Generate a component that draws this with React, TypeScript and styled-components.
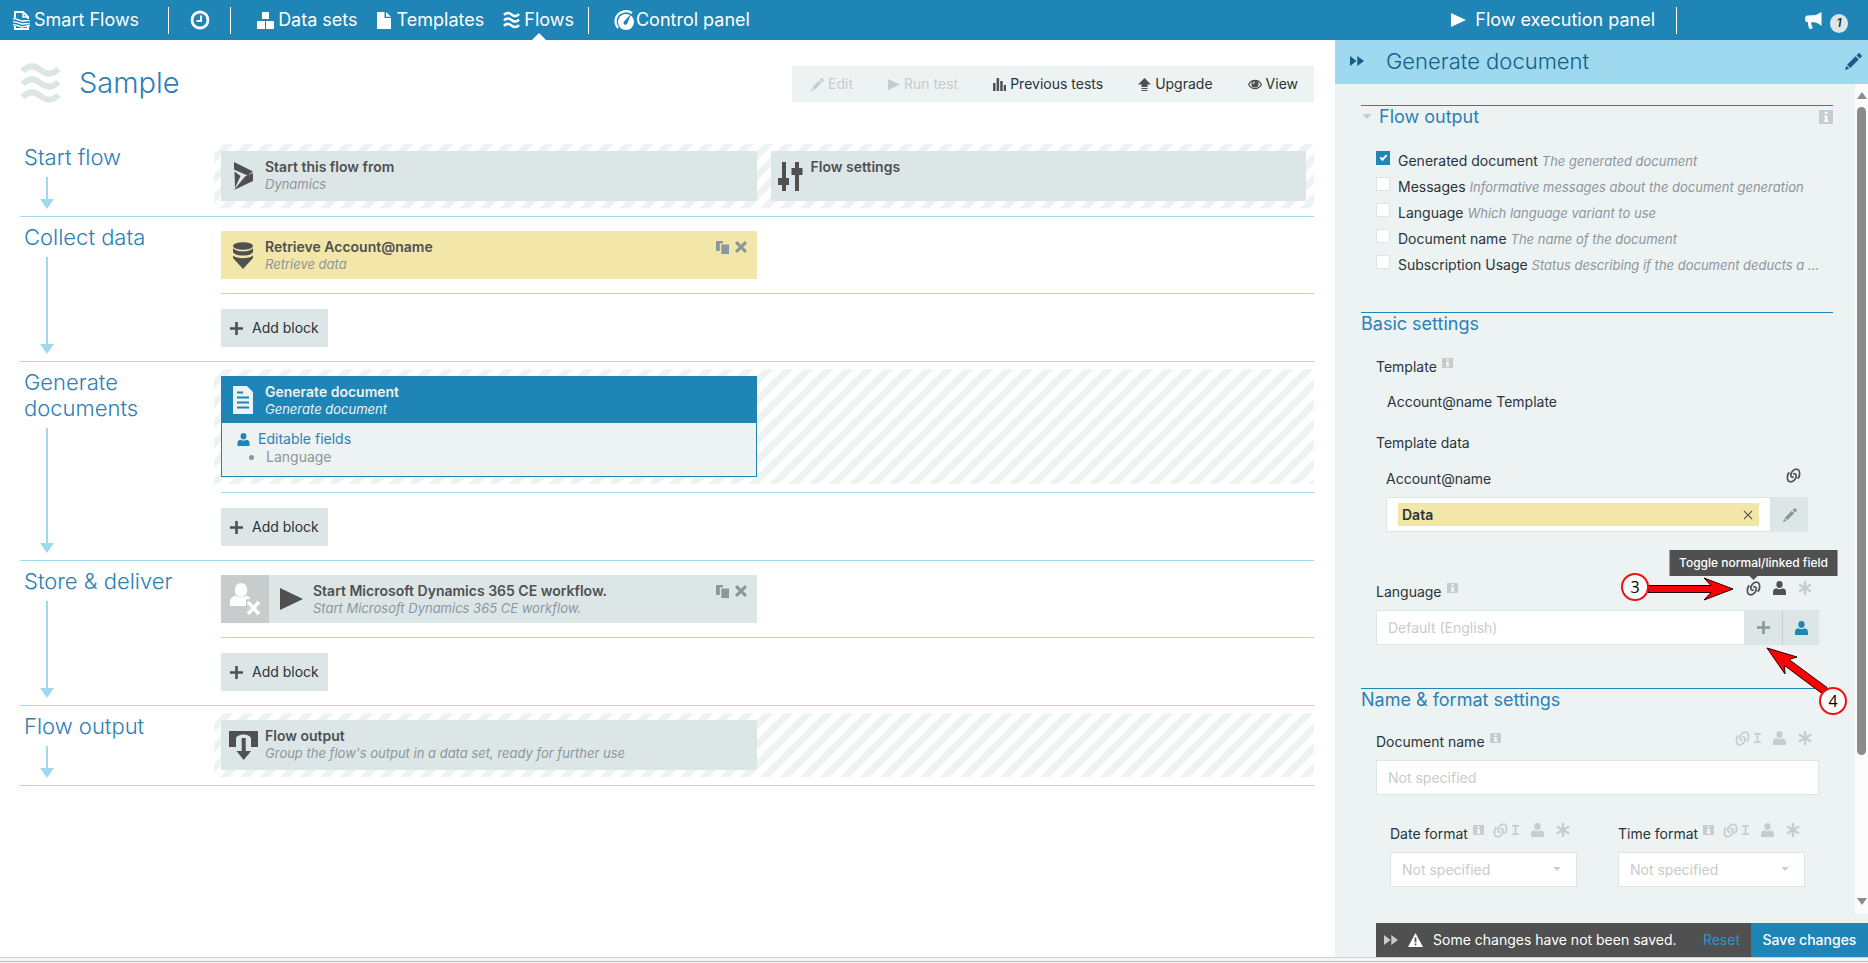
import React from "react";
import styled, { createGlobalStyle, css } from "styled-components";

const c = {
  blue: "#1f84b6",
  heading: "#2b80b6",
  pale: "#9fd9ef",
  navy: "#155f85",
  mist: "#edf3f3",
  block: "#dde6e7",
  sand: "#f2e6a8",
  ink: "#2a3439",
  dark: "#4f504f",
  muted: "#8c969d",
  faint: "#c7cccc",
};

const GlobalStyle = createGlobalStyle`
  *, *::before, *::after { box-sizing: border-box; }
  body { margin: 0; background: #fff; }
  body, button, input, select { font-family: Inter, "Liberation Sans", sans-serif; }
  body { font-size: 14px; line-height: 18px; color: ${c.ink}; }
  button { border: 0; background: none; padding: 0; margin: 0; font-size: 14px; line-height: 18px; color: inherit; cursor: pointer; }
  a { color: inherit; text-decoration: none; }
  h1, h2, h3, ul, p { margin: 0; padding: 0; font-weight: inherit; }
  ul { list-style: none; }
  svg { display: block; flex: none; overflow: visible; }
`;

/* ---------- icons ---------- */

type IconProps = { w?: number; h?: number };

const Waves = ({ w = 17, h = 16 }: IconProps) => (
  <svg width={w} height={h} viewBox="0 0 40 38" fill="none" stroke="currentColor" strokeWidth="6">
    <path d="M2 7C8 1 14 1 20 6s12 5 18-1" />
    <path d="M2 20C8 14 14 14 20 19s12 5 18-1" />
    <path d="M2 33C8 27 14 27 20 32s12 5 18-1" />
  </svg>
);

const LogoIcon = () => (
  <svg width="17" height="19" viewBox="0 0 17 19" fill="none" stroke="currentColor" strokeWidth="2">
    <path d="M2 7V1h8l5 5v2M2 15v3h13v-4" />
    <path d="M10 1v5h5" strokeWidth="1.4" />
    <path d="M0 8c4-1 6 2 9 2s5-1 8 0M0 11c4-1 6 2 9 2s5-1 8 0M0 14c4-1 6 2 9 2s5-2 8-1" strokeWidth="1.3" />
  </svg>
);

const ClockIcon = () => (
  <svg width="20" height="20" viewBox="0 0 20 20" fill="none" stroke="currentColor">
    <circle cx="10" cy="10" r="8" strokeWidth="2.8" />
    <path d="M11 5.500V11H6.500" strokeWidth="2" />
  </svg>
);

const BoxesIcon = () => (
  <svg width="17" height="17" viewBox="0 0 17 17" fill="currentColor">
    <path d="M5 0h7v7H5zM0 9h8v8H0zM9 9h8v8H9z" />
  </svg>
);

const FileIcon = () => (
  <svg width="14" height="17" viewBox="0 0 14 17" fill="currentColor">
    <path d="M0 0h7.500v6H14v11H0zM9 0l5 4.800H9z" />
  </svg>
);

const GaugeIcon = () => (
  <svg width="21" height="20" viewBox="0 0 21 20">
    <path d="M4 18C0 13 1 6 6 3s9-2 12 0" fill="none" stroke="currentColor" strokeWidth="2.200" />
    <circle cx="12" cy="12" r="8" fill="currentColor" />
    <path d="M17 4l-3.500 9a2 2 0 1 1-3-2z" fill={c.blue} />
  </svg>
);

const PlayIcon = ({ w = 15, h = 14 }: IconProps) => (
  <svg width={w} height={h} viewBox="0 0 10 10" preserveAspectRatio="none" fill="currentColor">
    <path d="M0 0l10 5-10 5z" />
  </svg>
);

const HornIcon = () => (
  <svg width="17" height="17" viewBox="0 0 17 17" fill="currentColor">
    <path d="M16.500 0v14c-3-2.500-5-3.400-8-3.700L6.200 10.200c0 2 .4 3.700 1.600 5.300l-1 1.200H4.400C3.400 14.600 3 12.500 3 10.200L1.500 10C.5 9.500 0 8.500 0 7s.5-3 2-3.600l6.500-.2c3-.2 5-1.200 8-3.200z" />
  </svg>
);

const PencilIcon = ({ w = 14, h = 14 }: IconProps) => (
  <svg width={w} height={h} viewBox="0 0 14 14" fill="currentColor">
    <path d="M11 0.400q.6-.6 1.200 0l1.400 1.400q.6.600 0 1.200l-1.500 1.500-2.600-2.600zM8.700 2.700l2.600 2.600-7 7L1.700 9.700zM1.100 10.500l2.400 2.400L0 14z" />
  </svg>
);

const BarsIcon = () => (
  <svg width="13" height="13" viewBox="0 0 13 13" fill={c.dark}>
    <path d="M0 5h2.500v8H0zM3.600 0h2.500v13H3.600zM7.200 3h2.500v10H7.200zM10.700 7H13v6h-2.300z" />
  </svg>
);

const UpgradeIcon = () => (
  <svg width="13" height="13" viewBox="0 0 13 13" fill={c.dark}>
    <path d="M6.500 0L13 6.500H9.500V9h-6V6.500H0zM3.500 10h6v1h-6zM3.500 12h6v1h-6z" />
  </svg>
);

const EyeIcon = () => (
  <svg width="14" height="11" viewBox="0 0 14 11">
    <path d="M.7 5.500C3.500 0 10.500 0 13.300 5.500 10.500 11 3.500 11 .7 5.500z" fill="none" stroke={c.dark} strokeWidth="1.300" />
    <circle cx="7" cy="5" r="3.600" fill={c.dark} />
    <path d="M5.200 5A1.900 1.900 0 0 1 7 3" fill="none" stroke="#fff" strokeWidth="1" />
  </svg>
);

const DynamicsIcon = () => (
  <svg width="19" height="28" viewBox="0 0 19 28" fill="currentColor">
    <path d="M0 0l19 9.500L13.500 13.500 0 7.500zM.5 9.500L6.500 14 1 26zM19 11v8L0 28 11 14.500z" />
  </svg>
);

const SlidersIcon = () => (
  <svg width="25" height="29" viewBox="0 0 25 29" fill="currentColor">
    <path d="M4 0h4v29H4zM0 16h11v7H0zM17 0h4v29h-4zM13.500 6h11v7h-11z" />
  </svg>
);

const DatabaseIcon = () => (
  <svg width="20" height="27" viewBox="0 0 20 27" fill="currentColor">
    <ellipse cx="10" cy="4" rx="10" ry="3.800" />
    <path d="M0 6c3 4.500 17 4.500 20 0v4c-2 4.800-18 4.800-20 0zM0 13.500c4 3.500 16 3.500 20 0V16L10 27 0 16z" />
  </svg>
);

const DocIcon = () => (
  <svg width="20" height="28" viewBox="0 0 20 28">
    <path d="M0 0h14l6 6v22H0z" fill={c.mist} />
    <path d="M4 6.500h6M4 11.500h12M4 16.500h12M4 21.500h12" stroke={c.blue} strokeWidth="2.200" />
  </svg>
);

const OutputIcon = () => (
  <svg width="29" height="29" viewBox="0 0 29 29" fill="currentColor">
    <path d="M0 0h29v16h-7V8c0-6-15-6-15 0v8H0z" />
    <path d="M12.700 7h4v13H22l-7.300 9-7.200-9h5.200z" />
  </svg>
);

const PersonIcon = ({ w = 12, h = 13 }: IconProps) => (
  <svg width={w} height={h} viewBox="0 0 12 13" fill="currentColor">
    <ellipse cx="6" cy="3.200" rx="2.900" ry="3.200" />
    <path d="M0 13v-3c0-2 1.200-3 3.200-3.300 1.600 1.200 4 1.200 5.600 0C10.800 7 12 8 12 10v3z" />
  </svg>
);

const PersonRemoveIcon = () => (
  <svg width="31" height="32" viewBox="0 0 31 32" fill="#fff">
    <ellipse cx="11" cy="7" rx="6.300" ry="7" />
    <path d="M0 23v-4c0-4 3-6 6-6.500 3 2.500 7 2.500 10 0 2 .3 3.500 1.500 4.500 3l-4.500 1V23z" />
    <path d="M18 19l11 12M29 19L18 31" stroke="#fff" strokeWidth="3.500" />
  </svg>
);

const CopyIcon = () => (
  <svg width="13" height="13" viewBox="0 0 13 13" fill="currentColor">
    <path d="M0 0h7v2.300H3.800V10H0zM5.300 3.500H13V13H5.300z" />
  </svg>
);

const CrossIcon = ({ w = 11, bold = 2.8 }: { w?: number; bold?: number }) => (
  <svg width={w} height={w} viewBox="0 0 11 11" stroke="currentColor" strokeWidth={bold}>
    <path d="M1 1l9 9M10 1l-9 9" />
  </svg>
);

const PlusIcon = () => (
  <svg width="13" height="13" viewBox="0 0 13 13" fill="currentColor">
    <path d="M5.200 0h2.600v5.200H13v2.600H7.800V13H5.200V7.800H0V5.200h5.200z" />
  </svg>
);

const ForwardIcon = ({ w = 14, h = 10 }: IconProps) => (
  <svg width={w} height={h} viewBox="0 0 14 10" fill="currentColor">
    <path d="M0 0l6.500 5L0 10zM7.300 0l6.700 5-6.700 5z" />
  </svg>
);

const CaretIcon = ({ w = 8, h = 4 }: IconProps) => (
  <svg width={w} height={h} viewBox="0 0 9 5" fill={c.faint}>
    <path d="M0 0h9L4.500 5z" />
  </svg>
);

const InfoIcon = ({ w = 11, h = 10 }: IconProps) => (
  <svg width={w} height={h} viewBox="0 0 11 10" preserveAspectRatio="none" role="img" aria-label="Info">
    <path d="M0 0h11v10H0z" fill={c.faint} />
    <path d="M4.600 1.300h2v1.500h-2zM4 3.900h2.600v3.700h.9v1H3.800v-1h.9V4.900H4z" fill="#fff" />
  </svg>
);

const LinkIcon = () => (
  <svg width="15" height="15" viewBox="0 0 16 16" fill="none" stroke="currentColor" strokeWidth="1.800">
    <path d="M3.600 4.600C.8 6.800.4 14.600 4.700 14.700c4 .1 6.600-4.200 6.100-7.200C10.500 5.900 8.800 5.600 8 7" />
    <path d="M12.400 11.400C15.200 9.200 15.600 1.400 11.300 1.300c-4-.1-6.600 4.200-6.100 7.200C5.500 10.100 7.200 10.400 8 9" />
  </svg>
);

const CursorIcon = () => (
  <svg width="7" height="12" viewBox="0 0 7 12" fill="none" stroke="currentColor" strokeWidth="1.800">
    <path d="M0 2.800h7M0 11.200h7M3.500 2v9" />
  </svg>
);

const AsteriskIcon = () => (
  <svg width="14" height="14" viewBox="0 0 14 14" stroke="currentColor" strokeWidth="2.400">
    <path d="M7 0v14M1 3.500l12 7M13 3.500l-12 7" />
  </svg>
);

const WarningIcon = () => (
  <svg width="15" height="14" viewBox="0 0 15 14">
    <path d="M7.500 0L15 14H0z" fill="#fff" />
    <path d="M7.500 4.500v4.700M7.500 10.500v1.800" stroke={c.dark} strokeWidth="1.800" />
  </svg>
);

/* ---------- frame and top bar ---------- */

const Frame = styled.div`
  display: flex;
  flex-direction: column;
  min-height: 100vh;
`;

const TopBar = styled.nav`
  display: flex;
  align-items: center;
  height: 40px;
  padding: 0 20px 0 13px;
  background: ${c.blue};
  color: #fff;
  font-size: 18px;
  white-space: nowrap;
`;

const NavLink = styled.a<{ $gap?: number; $active?: boolean }>`
  position: relative;
  display: flex;
  align-items: center;
  gap: ${(p) => p.$gap ?? 4}px;
  height: 40px;
  ${(p) =>
    p.$active &&
    css`
      &::after {
        content: "";
        position: absolute;
        bottom: 0;
        left: 50%;
        border: 7px solid transparent;
        border-top: 0;
        border-bottom-color: #fff;
        transform: translateX(-50%);
      }
    `}
`;

const NavGroup = styled.div<{ $left: number; $right: number }>`
  display: flex;
  align-items: center;
  gap: 19px;
  padding: 0 ${(p) => p.$right}px 0 ${(p) => p.$left}px;
`;

const Divider = styled.span`
  width: 1px;
  height: 27px;
  background: #fff;
`;

const Spacer = styled.span`
  flex: 1;
`;

const NewsButton = styled.button`
  display: flex;
  align-items: center;
  gap: 8px;
  margin-left: 128px;
  color: #fff;
`;

const Badge = styled.span`
  width: 18px;
  height: 19px;
  margin-top: 6px;
  border-radius: 50%;
  background: ${c.block};
  color: ${c.ink};
  font-size: 12px;
  font-style: italic;
  font-weight: 600;
  line-height: 17px;
  text-align: center;
`;

const Columns = styled.div`
  display: flex;
  flex: 1;
`;

const WindowEdge = styled.footer`
  height: 6px;
  border-top: 1px solid #d2d2d2;
  background: linear-gradient(#f4f4f4 3px, #bdbdbd 3px, #bdbdbd 4px, #f4f4f4 4px);
`;

/* ---------- flow editor ---------- */

const Main = styled.main`
  flex: 1;
  min-width: 0;
  padding: 0 21px 0 20px;
`;

const PageHeader = styled.header`
  display: flex;
  justify-content: space-between;
  align-items: flex-start;
  height: 97px;
  padding-top: 24px;
`;

const PageTitle = styled.h1`
  display: flex;
  align-items: center;
  gap: 18px;
  font-size: 29px;
  font-weight: 300;
  line-height: 36px;
  color: ${c.heading};
  svg {
    color: ${c.block};
  }
`;

const Toolbar = styled.div`
  display: flex;
  gap: 35px;
  height: 36px;
  margin-top: 2px;
  padding: 0 16px 0 19px;
  background: ${c.mist};
`;

const ToolbarButton = styled.button`
  display: flex;
  align-items: center;
  gap: 4px;
  &:disabled {
    color: ${c.faint};
    cursor: default;
  }
`;

const Stage = styled.section`
  display: grid;
  grid-template-columns: 194px 1fr;
  border-bottom: 1px solid ${c.pale};
`;

const StageLabel = styled.div`
  display: flex;
  flex-direction: column;
  padding: 7px 24px 7px 4px;
`;

const StageName = styled.h2`
  font-size: 22px;
  font-weight: 300;
  line-height: 26px;
  color: ${c.heading};
`;

const Arrow = styled.span`
  display: flex;
  flex: 1;
  flex-direction: column;
  align-items: center;
  width: 14px;
  margin: 7px 0 0 16px;
  &::before {
    content: "";
    flex: 1;
    width: 2px;
    background: ${c.pale};
  }
  &::after {
    content: "";
    border: 7px solid transparent;
    border-top: 10px solid ${c.pale};
    border-bottom: 0;
  }
`;

const Slots = styled.div<{ $striped?: boolean }>`
  display: grid;
  grid-template-columns: 1fr 1fr;
  gap: 14px;
  padding: 14px 8px 14px 7px;
  ${(p) =>
    p.$striped &&
    css`
      margin: 7px 0 8px;
      padding: 7px 8px 7px 7px;
      background: linear-gradient(
          -45deg,
          ${c.mist} 25%,
          transparent 25%,
          transparent 50%,
          ${c.mist} 50%,
          ${c.mist} 75%,
          transparent 75%
        )
        0 0 / 20px 20px;
    `}
`;

const AddRow = styled.div`
  margin-left: 7px;
  padding: 15px 0 14px;
  border-top: 1px solid ${c.pale};
`;

const AddButton = styled.button`
  display: flex;
  align-items: center;
  gap: 9px;
  height: 38px;
  padding: 0 9px;
  background: ${c.block};
  svg {
    color: ${c.dark};
  }
`;

type Tone = "plain" | "data" | "active";

const BlockCard = styled.article`
  min-width: 0;
`;

const BlockHead = styled.div<{ $tone?: Tone; $height?: number }>`
  display: flex;
  height: ${(p) => p.$height ?? 50}px;
  color: ${(p) => (p.$tone === "active" ? c.mist : c.dark)};
  background: ${(p) => (p.$tone === "active" ? c.blue : p.$tone === "data" ? c.sand : c.block)};
`;

const BlockIcon = styled.span<{ $slim?: boolean }>`
  display: grid;
  place-items: center;
  width: ${(p) => (p.$slim ? 40 : 44)}px;
`;

const UserBox = styled.span`
  display: grid;
  place-items: center;
  width: 48px;
  background: ${c.faint};
`;

const BlockText = styled.div`
  flex: 1;
  padding-top: 7px;
`;

const BlockTitle = styled.h3`
  font-size: 14px;
  font-weight: 600;
  line-height: 18px;
`;

const BlockNote = styled.p<{ $light?: boolean }>`
  font-size: 13px;
  font-style: italic;
  line-height: 16px;
  color: ${(p) => (p.$light ? c.mist : c.muted)};
`;

const BlockActions = styled.div`
  display: flex;
  align-items: flex-start;
  gap: 6px;
  padding: 10px 10px 0 0;
  button {
    color: ${c.muted};
  }
`;

const BlockBody = styled.div`
  height: 54px;
  padding: 7px 0 0 15px;
  border: 1px solid ${c.blue};
  border-top: 0;
  background: ${c.mist};
`;

const BodyTitle = styled.p`
  display: flex;
  align-items: center;
  gap: 8px;
  color: ${c.heading};
  svg {
    color: ${c.blue};
  }
`;

const BodyItem = styled.li`
  display: flex;
  align-items: center;
  gap: 12px;
  padding-left: 12px;
  color: ${c.muted};
  &::before {
    content: "";
    width: 5px;
    height: 5px;
    border-radius: 50%;
    background: ${c.muted};
  }
`;

/* ---------- settings panel ---------- */

const Panel = styled.aside`
  display: flex;
  flex-direction: column;
  width: 533px;
  background: ${c.mist};
`;

const PanelHeader = styled.header`
  display: flex;
  align-items: center;
  height: 44px;
  padding: 0 6px 2px 15px;
  background: ${c.pale};
  color: ${c.navy};
`;

const PanelTitle = styled.h2`
  flex: 1;
  padding-left: 22px;
  font-size: 22px;
  font-weight: 300;
  line-height: 26px;
`;

const PanelBody = styled.div`
  display: flex;
  flex: 1;
`;

const Settings = styled.form`
  flex: 1;
  min-width: 0;
  padding: 21px 22px 0 26px;
`;

const ScrollTrack = styled.div`
  display: flex;
  flex: none;
  flex-direction: column;
  align-items: center;
  width: 13px;
  padding: 8px 0 9px;
  background: #fbfbfb;
`;

const ScrollThumb = styled.span`
  flex: 650;
  width: 9px;
  margin-top: 8px;
  border-radius: 5px;
  background: #8b8b8b;
`;

const ScrollRest = styled.span`
  flex: 144;
`;

const ScrollArrow = styled.span<{ $up?: boolean }>`
  border: 5px solid transparent;
  ${(p) =>
    p.$up ? `border-top: 0; border-bottom: 7px solid #8b8b8b;` : `border-bottom: 0; border-top: 7px solid #8b8b8b;`}
`;

const Group = styled.section<{ $top?: number }>`
  margin-top: ${(p) => p.$top ?? 0}px;
  border-top: 1px solid ${c.blue};
`;

const GroupTitle = styled.h3`
  display: flex;
  align-items: center;
  gap: 6px;
  font-size: 18px;
  line-height: 21px;
  color: ${c.heading};
`;

const OutputList = styled.ul`
  margin: 21px 0 0;
  padding-left: 15px;
`;

const OutputItem = styled.li`
  display: flex;
  align-items: flex-start;
  height: 26px;
  gap: 8px;
`;

const Check = styled.input`
  appearance: none;
  flex: none;
  display: grid;
  place-items: center;
  width: 14px;
  height: 14px;
  margin: 3px 0 0;
  border: 1px solid ${c.block};
  background: #fff;
  &:checked {
    border-color: ${c.blue};
    background: ${c.blue};
  }
  &:checked::after {
    content: "";
    width: 7px;
    height: 4px;
    margin-top: -2px;
    border: solid #fff;
    border-width: 0 0 2px 2px;
    transform: rotate(-45deg);
  }
`;

const OutputLabel = styled.label`
  padding-top: 4px;
  white-space: nowrap;
  em {
    font-size: 13px;
    color: ${c.muted};
  }
`;

const PlainLabel = styled.p<{ $top: number; $inset?: boolean }>`
  display: flex;
  gap: 5px;
  margin-top: ${(p) => p.$top}px;
  padding-left: ${(p) => (p.$inset ? 26 : 15)}px;
`;

const Field = styled.div<{ $top: number; $inset?: boolean }>`
  position: relative;
  margin: ${(p) => p.$top}px ${(p) => (p.$inset ? 25 : 14)}px 0 ${(p) => (p.$inset ? 25 : 15)}px;
`;

const LabelRow = styled.div<{ $close?: boolean }>`
  display: flex;
  align-items: flex-start;
  justify-content: ${(p) => (p.$close ? "flex-start" : "space-between")};
  gap: 9px;
  height: 29px;
  padding-right: 7px;
`;

const FieldLabel = styled.label`
  display: flex;
  gap: 5px;
  padding-top: 2px;
  white-space: nowrap;
`;

const Tools = styled.div`
  display: flex;
  gap: 12px;
`;

const Tool = styled.button.attrs({ type: "button" })<{ $on?: boolean }>`
  position: relative;
  display: flex;
  gap: 4px;
  color: ${(p) => (p.$on ? c.dark : c.faint)};
`;

const Tooltip = styled.span`
  position: absolute;
  bottom: calc(100% + 5px);
  left: 50%;
  padding: 4px 10px;
  background: ${c.dark};
  color: #fff;
  font-size: 12px;
  font-weight: 500;
  white-space: nowrap;
  transform: translateX(-50%);
  &::after {
    content: "";
    position: absolute;
    top: 100%;
    left: 50%;
    border: 4px solid transparent;
    border-top-color: ${c.dark};
    border-bottom: 0;
    transform: translateX(-50%);
  }
`;

const InputRow = styled.div`
  display: flex;
  height: 35px;
`;

const inputLook = css`
  flex: 1;
  width: 100%;
  min-width: 0;
  height: 35px;
  padding: 0 11px;
  border: 1px solid ${c.block};
  border-radius: 0;
  background: #fff;
  font-size: 14px;
`;

const TextInput = styled.input`
  ${inputLook}
  &::placeholder {
    color: ${c.faint};
    opacity: 1;
  }
`;

const SelectWrap = styled.div`
  position: relative;
  svg {
    position: absolute;
    top: 15px;
    right: 16px;
    pointer-events: none;
  }
`;

const Select = styled.select`
  ${inputLook}
  appearance: none;
  color: ${c.faint};
`;

const SideButton = styled.button.attrs({ type: "button" })<{ $accent?: boolean }>`
  display: grid;
  place-items: center;
  width: 37px;
  background: ${c.block};
  color: ${(p) => (p.$accent ? c.blue : c.muted)};
  & + & {
    border-left: 1px solid ${c.faint};
  }
`;

const ChipBox = styled.div`
  flex: 1;
  padding: 5px 11px;
  border: 1px solid ${c.block};
  background: #fff;
`;

const Chip = styled.div`
  display: flex;
  align-items: center;
  justify-content: space-between;
  height: 23px;
  padding: 0 6px 0 4px;
  background: ${c.sand};
  font-weight: 600;
  button {
    color: ${c.dark};
  }
`;

const Pair = styled.div`
  display: grid;
  grid-template-columns: minmax(0, 1fr) minmax(0, 1fr);
  gap: 41px;
  margin: 28px 28px 0 29px;
`;

const Callouts = styled.svg`
  position: absolute;
  top: -11px;
  right: -32px;
  z-index: 1;
  pointer-events: none;
`;

const CalloutText = styled.text`
  font-family: "Open Sans", sans-serif;
  font-size: 16px;
  text-anchor: middle;
`;

const SaveBar = styled.div`
  display: flex;
  align-items: center;
  height: 34px;
  margin: 9px 0 0 41px;
  padding-left: 8px;
  background: ${c.dark};
  color: #fff;
`;

const SaveMessage = styled.span`
  flex: 1;
  padding-left: 10px;
`;

const ResetButton = styled.button`
  margin-right: 11px;
  color: #2d93d0;
`;

const SaveButton = styled.button`
  height: 34px;
  width: 117px;
  background: ${c.blue};
  font-weight: 500;
`;

const Dismiss = styled.button`
  margin-right: 10px;
  color: ${c.faint};
`;

/* ---------- composition ---------- */

const Actions = () => (
  <BlockActions>
    <button aria-label="Duplicate block"><CopyIcon /></button>
    <button aria-label="Remove block"><CrossIcon w={12} /></button>
  </BlockActions>
);

const AddBlock = () => (
  <AddRow>
    <AddButton><PlusIcon />Add block</AddButton>
  </AddRow>
);

const StageSection = ({ name, children }: { name: string; children: React.ReactNode }) => (
  <Stage>
    <StageLabel>
      <StageName>{name}</StageName>
      <Arrow />
    </StageLabel>
    <div>{children}</div>
  </Stage>
);

type BlockProps = {
  icon: React.ReactNode;
  title: string;
  note?: string;
  tone?: Tone;
  height?: number;
  slim?: boolean;
  lead?: React.ReactNode;
  actions?: boolean;
  children?: React.ReactNode;
};

const Block = ({ icon, title, note, tone, height, slim, lead, actions, children }: BlockProps) => (
  <BlockCard>
    <BlockHead $tone={tone} $height={height}>
      {lead}
      <BlockIcon $slim={slim}>{icon}</BlockIcon>
      <BlockText>
        <BlockTitle>{title}</BlockTitle>
        {note && <BlockNote $light={tone === "active"}>{note}</BlockNote>}
      </BlockText>
      {actions && <Actions />}
    </BlockHead>
    {children}
  </BlockCard>
);

const FieldTools = () => (
  <Tools>
    <Tool aria-label="Toggle linked or text"><LinkIcon /><CursorIcon /></Tool>
    <Tool aria-label="Editable by user"><PersonIcon w={13} h={14} /></Tool>
    <Tool aria-label="Required"><AsteriskIcon /></Tool>
  </Tools>
);

const FormatField = ({ id, label }: { id: string; label: string }) => (
  <div>
    <LabelRow $close>
      <FieldLabel htmlFor={id}>{label}<InfoIcon /></FieldLabel>
      <FieldTools />
    </LabelRow>
    <SelectWrap>
      <Select id={id}>
        <option>Not specified</option>
      </Select>
      <CaretIcon />
    </SelectWrap>
  </div>
);

const outputs: [string, string][] = [
  ["Generated document", "The generated document"],
  ["Messages", "Informative messages about the document generation"],
  ["Language", "Which language variant to use"],
  ["Document name", "The name of the document"],
  ["Subscription Usage", "Status describing if the document deducts a ..."],
];

export default function App() {
  return (
    <Frame>
      <GlobalStyle />
      <TopBar>
        <NavLink href="#home"><LogoIcon />Smart Flows</NavLink>
        <NavGroup $left={29} $right={0} />
        <Divider />
        <NavGroup $left={21} $right={20}>
          <NavLink href="#recent" aria-label="Recent"><ClockIcon /></NavLink>
        </NavGroup>
        <Divider />
        <NavGroup $left={26} $right={14}>
          <NavLink href="#data-sets"><BoxesIcon />Data sets</NavLink>
          <NavLink href="#templates" $gap={6}><FileIcon />Templates</NavLink>
          <NavLink href="#flows" $active><Waves />Flows</NavLink>
        </NavGroup>
        <Divider />
        <NavGroup $left={25} $right={0}>
          <NavLink href="#control" $gap={1}><GaugeIcon />Control panel</NavLink>
        </NavGroup>
        <Spacer />
        <NavGroup $left={0} $right={21}>
          <NavLink href="#execution" $gap={9}><PlayIcon />Flow execution panel</NavLink>
        </NavGroup>
        <Divider />
        <NewsButton aria-label="News"><HornIcon /><Badge>1</Badge></NewsButton>
      </TopBar>

      <Columns>
        <Main>
          <PageHeader>
            <PageTitle><Waves w={41} h={38} />Sample</PageTitle>
            <Toolbar>
              <ToolbarButton disabled><PencilIcon w={13} h={13} />Edit</ToolbarButton>
              <ToolbarButton disabled><PlayIcon w={12} h={11} />Run test</ToolbarButton>
              <ToolbarButton><BarsIcon />Previous tests</ToolbarButton>
              <ToolbarButton><UpgradeIcon />Upgrade</ToolbarButton>
              <ToolbarButton><EyeIcon />View</ToolbarButton>
            </Toolbar>
          </PageHeader>

          <StageSection name="Start flow">
            <Slots $striped>
              <Block icon={<DynamicsIcon />} title="Start this flow from" note="Dynamics" />
              <Block icon={<SlidersIcon />} title="Flow settings" slim />
            </Slots>
          </StageSection>

          <StageSection name="Collect data">
            <Slots>
              <Block icon={<DatabaseIcon />} title="Retrieve Account@name" note="Retrieve data" tone="data" height={48} actions />
            </Slots>
            <AddBlock />
          </StageSection>

          <StageSection name="Generate documents">
            <Slots $striped>
              <Block icon={<DocIcon />} title="Generate document" note="Generate document" tone="active" height={47}>
                <BlockBody>
                  <BodyTitle><PersonIcon w={13} h={13} />Editable fields</BodyTitle>
                  <ul><BodyItem>Language</BodyItem></ul>
                </BlockBody>
              </Block>
            </Slots>
            <AddBlock />
          </StageSection>

          <StageSection name="Store & deliver">
            <Slots>
              <Block
                lead={<UserBox><PersonRemoveIcon /></UserBox>}
                icon={<PlayIcon w={23} h={22} />}
                title="Start Microsoft Dynamics 365 CE workflow."
                note="Start Microsoft Dynamics 365 CE workflow."
                height={48}
                actions
              />
            </Slots>
            <AddBlock />
          </StageSection>

          <StageSection name="Flow output">
            <Slots $striped>
              <Block icon={<OutputIcon />} title="Flow output" note="Group the flow's output in a data set, ready for further use" />
            </Slots>
          </StageSection>
        </Main>

        <Panel>
          <PanelHeader>
            <button aria-label="Collapse panel"><ForwardIcon /></button>
            <PanelTitle>Generate document</PanelTitle>
            <button aria-label="Rename"><PencilIcon w={17} h={17} /></button>
          </PanelHeader>
          <PanelBody>
            <Settings>
              <Group>
                <GroupTitle>
                  <CaretIcon w={12} h={5} />Flow output<Spacer /><InfoIcon w={14} h={14} />
                </GroupTitle>
                <OutputList>
                  {outputs.map(([name, about], i) => (
                    <OutputItem key={name}>
                      <Check type="checkbox" id={`out-${i}`} defaultChecked={i === 0} />
                      <OutputLabel htmlFor={`out-${i}`}>{name} <em>{about}</em></OutputLabel>
                    </OutputItem>
                  ))}
                </OutputList>
              </Group>

              <Group $top={34}>
                <GroupTitle>Basic settings</GroupTitle>
                <PlainLabel $top={24}>Template<InfoIcon /></PlainLabel>
                <PlainLabel $top={17} $inset>Account@name Template</PlainLabel>
                <PlainLabel $top={23}>Template data</PlainLabel>
                <Field $top={16} $inset>
                  <LabelRow>
                    <FieldLabel>Account@name</FieldLabel>
                    <Tool $on aria-label="Toggle linked field"><LinkIcon /></Tool>
                  </LabelRow>
                  <InputRow>
                    <ChipBox>
                      <Chip>Data<button type="button" aria-label="Remove Data"><CrossIcon w={10} bold={1.2} /></button></Chip>
                    </ChipBox>
                    <SideButton aria-label="Edit data"><PencilIcon /></SideButton>
                  </InputRow>
                </Field>
                <Field $top={49}>
                  <LabelRow>
                    <FieldLabel htmlFor="language">Language<InfoIcon /></FieldLabel>
                    <Tools>
                      <Tool $on aria-label="Toggle normal/linked field">
                        <LinkIcon />
                        <Tooltip role="tooltip">Toggle normal/linked field</Tooltip>
                      </Tool>
                      <Tool $on aria-label="Editable by user"><PersonIcon w={13} h={14} /></Tool>
                      <Tool aria-label="Required"><AsteriskIcon /></Tool>
                    </Tools>
                  </LabelRow>
                  <InputRow>
                    <TextInput id="language" placeholder="Default (English)" />
                    <SideButton aria-label="Add"><PlusIcon /></SideButton>
                    <SideButton $accent aria-label="User field"><PersonIcon w={13} h={14} /></SideButton>
                  </InputRow>
                  <Callouts width="231" height="150" viewBox="0 0 231 150">
                    <g fill="#f00" stroke="#200" strokeWidth="1">
                      <path d="M28 15.500H91L84 8l29 11-29 11 7-7.500H28z" />
                      <path d="M147 78l30 9-8 2.500 38 28-5 6-37.500-28L165 104z" />
                    </g>
                    <g fill="#fff" stroke="#f01010" strokeWidth="2">
                      <circle cx="15" cy="17" r="13" />
                      <circle cx="213" cy="131" r="13" />
                    </g>
                    <CalloutText x="15" y="23">3</CalloutText>
                    <CalloutText x="213" y="137">4</CalloutText>
                  </Callouts>
                </Field>
              </Group>

              <Group $top={43}>
                <GroupTitle>Name &amp; format settings</GroupTitle>
                <Field $top={21}>
                  <LabelRow>
                    <FieldLabel htmlFor="doc-name">Document name<InfoIcon /></FieldLabel>
                    <FieldTools />
                  </LabelRow>
                  <TextInput id="doc-name" placeholder="Not specified" />
                </Field>
                <Pair>
                  <FormatField id="date-format" label="Date format" />
                  <FormatField id="time-format" label="Time format" />
                </Pair>
              </Group>
            </Settings>
            <ScrollTrack aria-hidden="true">
              <ScrollArrow $up />
              <ScrollThumb />
              <ScrollRest />
              <ScrollArrow />
            </ScrollTrack>
          </PanelBody>
          <SaveBar>
            <Dismiss aria-label="Hide message"><ForwardIcon /></Dismiss>
            <WarningIcon />
            <SaveMessage>Some changes have not been saved.</SaveMessage>
            <ResetButton>Reset</ResetButton>
            <SaveButton>Save changes</SaveButton>
          </SaveBar>
        </Panel>
      </Columns>
      <WindowEdge />
    </Frame>
  );
}
